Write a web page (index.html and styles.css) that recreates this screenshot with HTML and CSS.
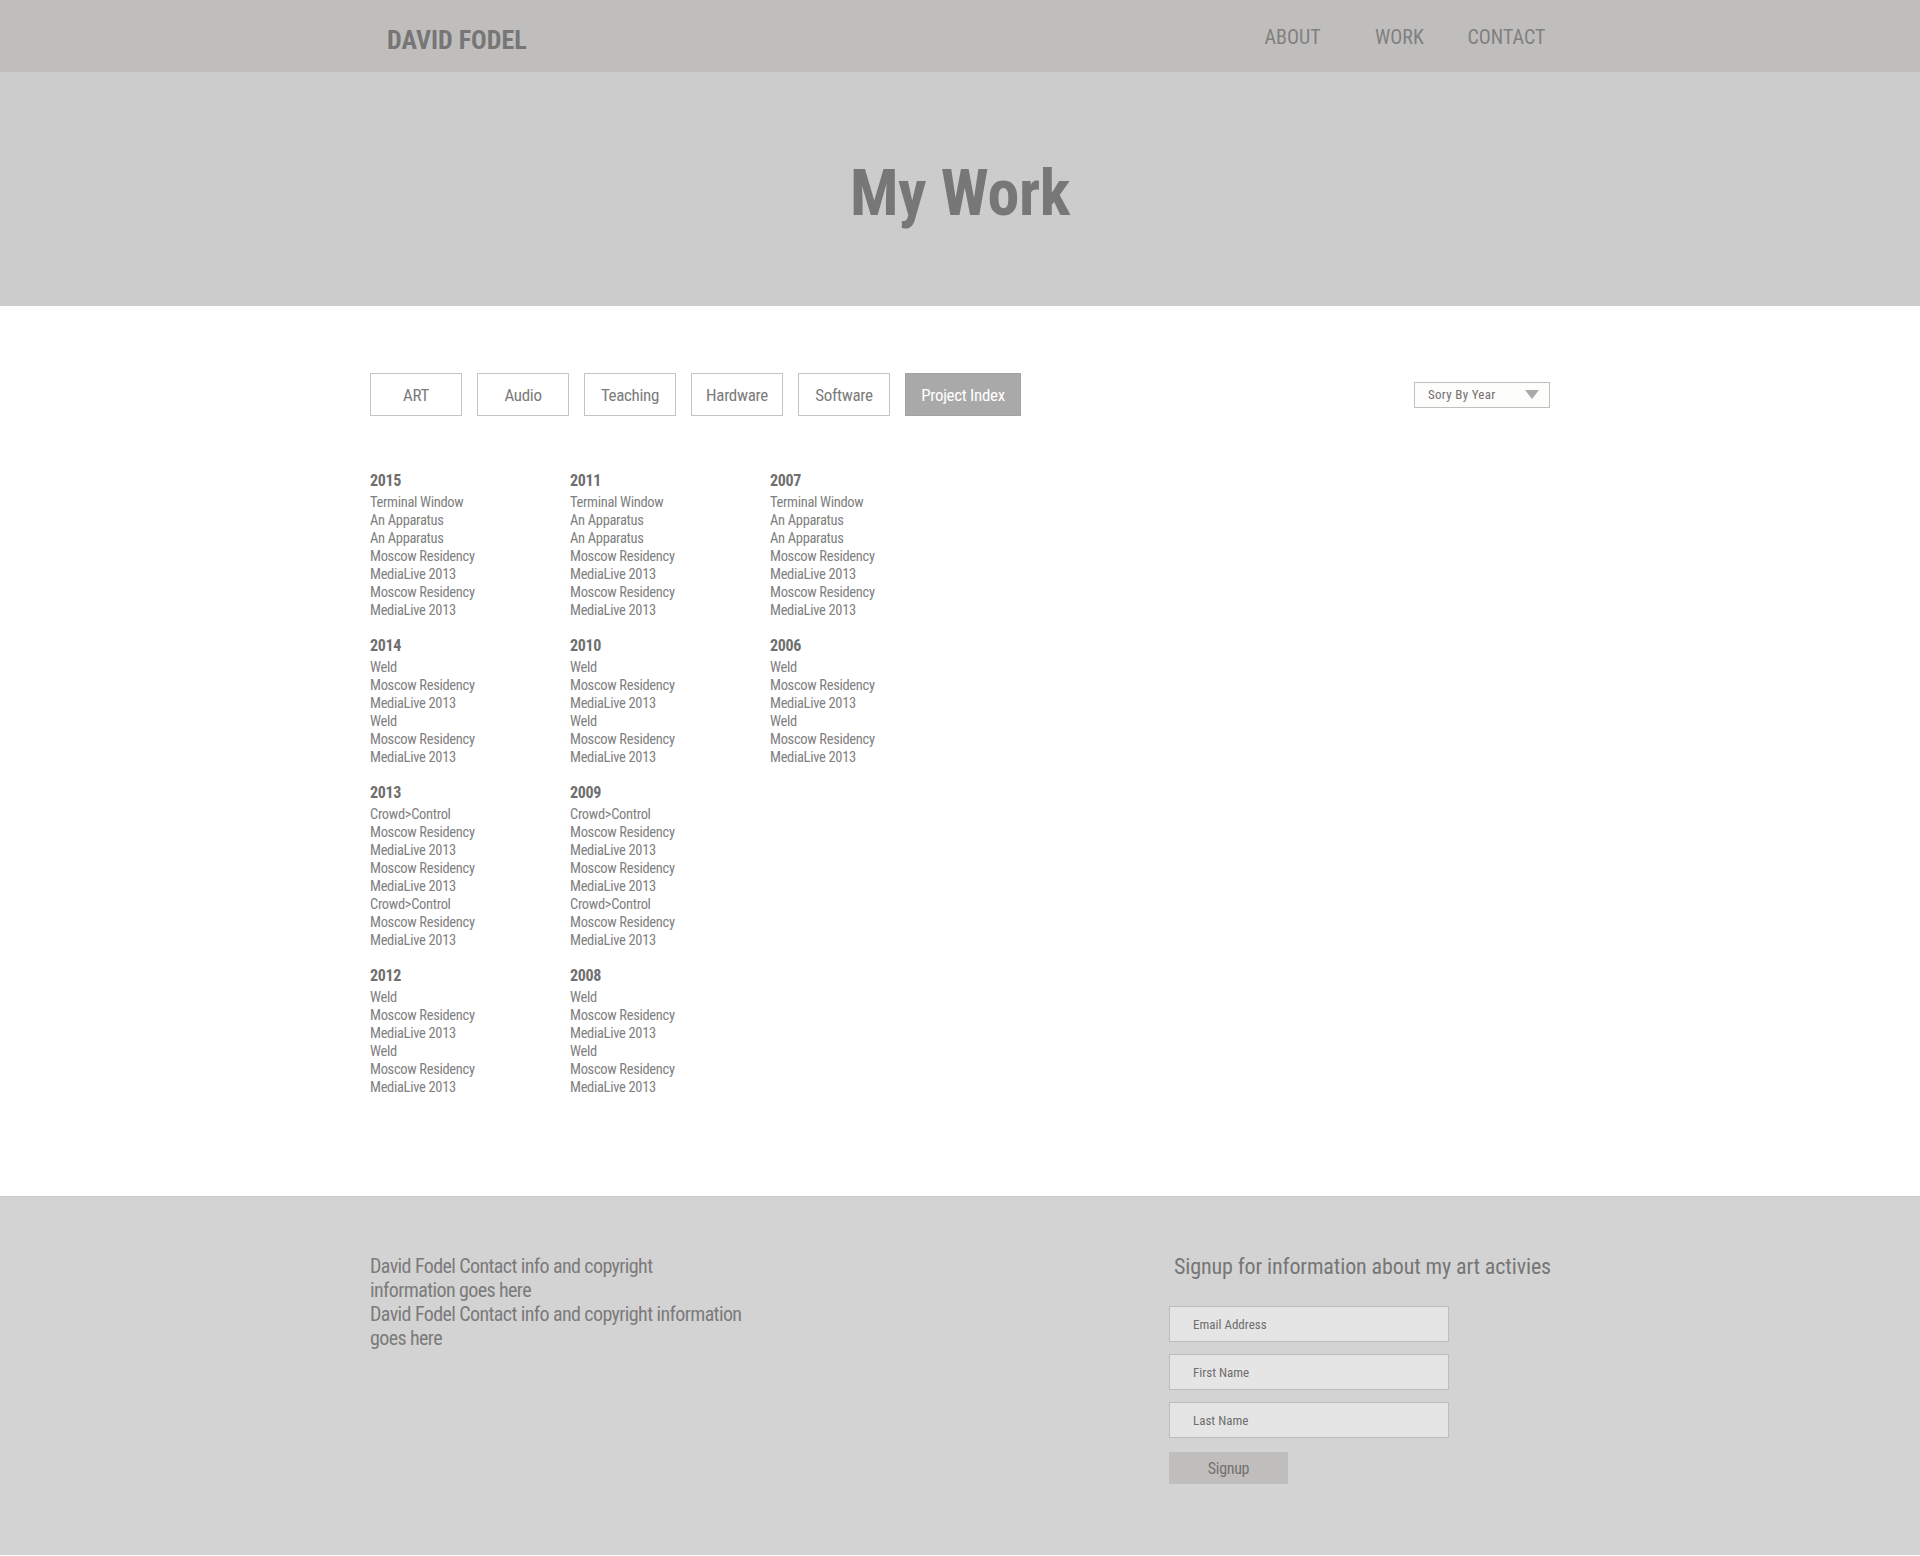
FILE: index.html
```html
<!DOCTYPE html>
<html lang="en">
<head>
<meta charset="utf-8">
<title>David Fodel - My Work</title>
<link rel="stylesheet" href="styles.css">
</head>
<body>
<header class="site-header">
  <div class="header-inner">
    <div class="logo">DAVID FODEL</div>
    <nav class="main-nav">
      <a class="nav-link" href="#">ABOUT</a>
      <a class="nav-link" href="#">WORK</a>
      <a class="nav-link" href="#">CONTACT</a>
    </nav>
  </div>
</header>

<section class="hero">
  <h1 class="hero-title">My Work</h1>
</section>

<main class="content">
  <div class="container">
    <div class="toolbar">
      <div class="filters">
        <button class="filter">ART</button>
        <button class="filter">Audio</button>
        <button class="filter">Teaching</button>
        <button class="filter">Hardware</button>
        <button class="filter">Software</button>
        <button class="filter filter-active">Project Index</button>
      </div>
      <div class="sort">
        <span class="sort-label">Sory By Year</span>
        <span class="sort-arrow"></span>
      </div>
    </div>

    <div class="index">
      <div class="index-col">
        <div class="year-block">
          <h3 class="year">2015</h3>
          <ul class="items">
            <li>Terminal Window</li><li>An Apparatus</li><li>An Apparatus</li><li>Moscow Residency</li><li>MediaLive 2013</li><li>Moscow Residency</li><li>MediaLive 2013</li>
          </ul>
        </div>
        <div class="year-block">
          <h3 class="year">2014</h3>
          <ul class="items">
            <li>Weld</li><li>Moscow Residency</li><li>MediaLive 2013</li><li>Weld</li><li>Moscow Residency</li><li>MediaLive 2013</li>
          </ul>
        </div>
        <div class="year-block">
          <h3 class="year">2013</h3>
          <ul class="items">
            <li>Crowd&gt;Control</li><li>Moscow Residency</li><li>MediaLive 2013</li><li>Moscow Residency</li><li>MediaLive 2013</li><li>Crowd&gt;Control</li><li>Moscow Residency</li><li>MediaLive 2013</li>
          </ul>
        </div>
        <div class="year-block">
          <h3 class="year">2012</h3>
          <ul class="items">
            <li>Weld</li><li>Moscow Residency</li><li>MediaLive 2013</li><li>Weld</li><li>Moscow Residency</li><li>MediaLive 2013</li>
          </ul>
        </div>
      </div>

      <div class="index-col">
        <div class="year-block">
          <h3 class="year">2011</h3>
          <ul class="items">
            <li>Terminal Window</li><li>An Apparatus</li><li>An Apparatus</li><li>Moscow Residency</li><li>MediaLive 2013</li><li>Moscow Residency</li><li>MediaLive 2013</li>
          </ul>
        </div>
        <div class="year-block">
          <h3 class="year">2010</h3>
          <ul class="items">
            <li>Weld</li><li>Moscow Residency</li><li>MediaLive 2013</li><li>Weld</li><li>Moscow Residency</li><li>MediaLive 2013</li>
          </ul>
        </div>
        <div class="year-block">
          <h3 class="year">2009</h3>
          <ul class="items">
            <li>Crowd&gt;Control</li><li>Moscow Residency</li><li>MediaLive 2013</li><li>Moscow Residency</li><li>MediaLive 2013</li><li>Crowd&gt;Control</li><li>Moscow Residency</li><li>MediaLive 2013</li>
          </ul>
        </div>
        <div class="year-block">
          <h3 class="year">2008</h3>
          <ul class="items">
            <li>Weld</li><li>Moscow Residency</li><li>MediaLive 2013</li><li>Weld</li><li>Moscow Residency</li><li>MediaLive 2013</li>
          </ul>
        </div>
      </div>

      <div class="index-col">
        <div class="year-block">
          <h3 class="year">2007</h3>
          <ul class="items">
            <li>Terminal Window</li><li>An Apparatus</li><li>An Apparatus</li><li>Moscow Residency</li><li>MediaLive 2013</li><li>Moscow Residency</li><li>MediaLive 2013</li>
          </ul>
        </div>
        <div class="year-block">
          <h3 class="year">2006</h3>
          <ul class="items">
            <li>Weld</li><li>Moscow Residency</li><li>MediaLive 2013</li><li>Weld</li><li>Moscow Residency</li><li>MediaLive 2013</li>
          </ul>
        </div>
      </div>
    </div>
  </div>
</main>

<footer class="site-footer">
  <div class="container footer-inner">
    <div class="footer-info">
      <p class="info-text info-narrow">David Fodel Contact info and copyright information goes here</p>
      <p class="info-text info-wide">David Fodel Contact info and copyright information goes here</p>
    </div>
    <form class="signup">
      <h2 class="signup-title">Signup for information about my art activies</h2>
      <input class="field" type="text" placeholder="Email Address">
      <input class="field" type="text" placeholder="First Name">
      <input class="field" type="text" placeholder="Last Name">
      <button class="signup-btn" type="button">Signup</button>
    </form>
  </div>
</footer>
</body>
</html>
```

FILE: styles.css
```css
* {
  box-sizing: border-box;
}

html, body {
  margin: 0;
  padding: 0;
}

body {
  font-family: "Roboto Condensed", "Liberation Sans", Arial, sans-serif;
  letter-spacing: -0.02em;
  color: #7d7d7d;
  background: #ffffff;
}

.container {
  width: 1180px;
  margin: 0 auto;
}

/* Header */
.site-header {
  background: #bfbebc;
  height: 72px;
}

.header-inner {
  width: 1200px;
  margin: 0 auto;
  padding: 27px 0 0 27px;
  display: flex;
  justify-content: space-between;
  align-items: flex-start;
}

.logo {
  font-size: 26px;
  line-height: 26px;
  font-weight: bold;
  letter-spacing: 0;
  color: #767676;
}

.main-nav {
  display: flex;
}

.nav-link {
  width: 107px;
  text-align: center;
  font-size: 20px;
  line-height: 20px;
  letter-spacing: 0;
  color: #808080;
  text-decoration: none;
}

/* Hero */
.hero {
  background: #cccccc;
  height: 234px;
  padding-top: 90px;
}

.hero-title {
  margin: 0;
  text-align: center;
  font-size: 64px;
  line-height: 64px;
  font-weight: bold;
  color: #777777;
}

/* Content */
.content {
  padding: 67px 0 99px;
  border-bottom: 1px solid #c9c9c9;
}

.toolbar {
  display: flex;
  justify-content: space-between;
  align-items: center;
}

.filters {
  display: flex;
  gap: 15px;
}

.filter {
  width: 92px;
  height: 43px;
  padding: 0;
  background: #ffffff;
  border: 1px solid #c4c4c4;
  font-family: inherit;
  letter-spacing: inherit;
  font-size: 17px;
  color: #7b7b7b;
}

.filter-active {
  width: 116px;
  background: #a9a9a9;
  border-color: #a3a3a3;
  color: #ffffff;
}

.sort {
  width: 136px;
  height: 26px;
  border: 1px solid #c0c0c0;
  background: #fdfdfb;
  display: flex;
  align-items: center;
  justify-content: space-between;
  padding: 0 10px 0 13px;
  font-size: 13px;
  letter-spacing: 0.3px;
  color: #707070;
}

.sort-arrow {
  width: 0;
  height: 0;
  border-left: 7px solid transparent;
  border-right: 7px solid transparent;
  border-top: 9px solid #aaaaaa;
}

.index {
  display: flex;
  margin-top: 55px;
}

.index-col {
  width: 200px;
}

.year-block {
  margin-bottom: 16px;
}

.year-block:last-child {
  margin-bottom: 0;
}

.year {
  margin: 0 0 3px;
  font-size: 16px;
  line-height: 20px;
  font-weight: bold;
  color: #6f6f6f;
}

.items {
  list-style: none;
  margin: 0;
  padding: 0;
  font-size: 14.5px;
  line-height: 18px;
  color: #808080;
}

/* Footer */
.site-footer {
  background: #d3d3d3;
  padding: 57px 0 71px;
}

.footer-inner {
  display: flex;
  justify-content: space-between;
  align-items: flex-start;
}

.info-text {
  margin: 0;
  font-size: 20px;
  line-height: 24px;
  letter-spacing: -0.03em;
  color: #7b7b7b;
}

.info-narrow {
  width: 320px;
}

.info-wide {
  width: 398px;
}

.signup {
  width: 381px;
  display: flex;
  flex-direction: column;
  align-items: flex-start;
}

.signup-title {
  margin: 0 0 26px 5px;
  font-size: 22px;
  line-height: 26px;
  font-weight: normal;
  letter-spacing: -0.005em;
  white-space: nowrap;
  color: #767676;
}

.field {
  width: 280px;
  height: 36px;
  margin: 0 0 12px;
  padding: 0 0 0 23px;
  background: #e5e5e5;
  border: 1px solid #bdbdbd;
  font-family: inherit;
  letter-spacing: 0;
  font-size: 13px;
  color: #6e6e6e;
}

.field::placeholder {
  color: #6e6e6e;
}

.signup-btn {
  margin-top: 2px;
  width: 119px;
  height: 32px;
  padding: 0;
  background: #bfbebc;
  border: none;
  font-family: inherit;
  letter-spacing: inherit;
  font-size: 16px;
  color: #727272;
}
```
